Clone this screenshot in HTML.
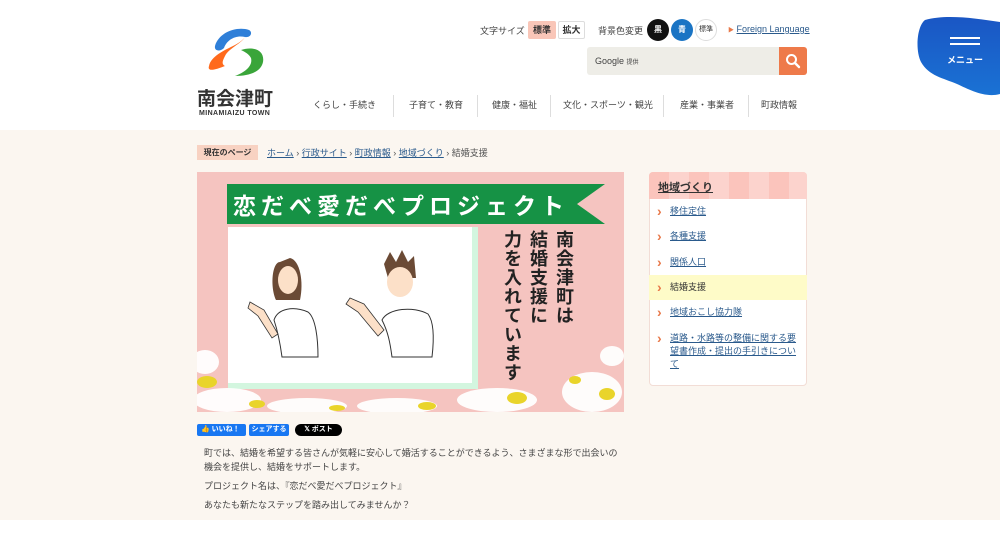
<!DOCTYPE html>
<html><head><meta charset="utf-8"><style>
*{margin:0;padding:0;box-sizing:border-box}
body{width:1000px;height:540px;overflow:hidden;background:#fff;font-family:"Liberation Sans","Noto Sans CJK JP",sans-serif;color:#333;position:relative}
.a{position:absolute}
.cream{left:0;top:130px;width:1000px;height:390px;background:#fbf6f0}
a{color:#2a5a8c}
.nav span{position:absolute;top:98px;font-size:9px;color:#444}
.sep{position:absolute;top:95px;width:1px;height:22px;background:#ddd}
.side a{display:block;font-size:9px;color:#2a5a8c;text-decoration:underline;padding-left:21px;position:relative;line-height:13px}
.side .it{position:absolute;left:649px;width:158px}
.chev{position:absolute;left:8px;top:-2px;color:#e8794a;font-size:14px;font-weight:bold}
p.t{position:absolute;left:204px;font-size:9px;color:#444;line-height:14px}
.vt{position:absolute;writing-mode:vertical-rl;font-size:18px;font-weight:bold;color:#222;line-height:22px;letter-spacing:1px}
</style></head><body>
<div class="a cream"></div>

<svg class="a" style="left:205px;top:26px" width="62" height="55" viewBox="0 0 62 55">
<path d="M10 20 C14 6 32 0 44 4 C48 6 46 12 40 11 C30 9 22 14 19 22 C15 26 9 25 10 20Z" fill="#2f7fd8"/>
<path d="M40 11 C36 18 24 22 20 30 C18 34 16 38 20 40 C10 44 2 46 4 40 C6 30 20 24 28 20 C34 17 38 14 40 11Z" fill="#ff6a1c"/>
<path d="M36 24 C48 20 60 24 58 36 C56 46 44 50 30 50 C40 46 48 40 46 32 C44 28 40 26 36 24Z" fill="#3aa53a"/>
</svg>
<div class="a" style="left:197px;top:84px;font-size:19px;font-weight:bold;color:#333">南会津町</div>
<div class="a" style="left:199px;top:110px;font-size:7px;font-weight:bold;color:#333;letter-spacing:.4px">MINAMIAIZU TOWN</div>

<div class="a" style="left:480px;top:24px;font-size:9px;color:#444">文字サイズ</div>
<div class="a" style="left:528px;top:21px;width:28px;height:18px;background:#f9c6b8;border-radius:2px;font-size:9px;font-weight:bold;text-align:center;line-height:18px">標準</div>
<div class="a" style="left:558px;top:21px;width:27px;height:18px;border:1px solid #ddd;border-radius:2px;font-size:9px;font-weight:bold;text-align:center;line-height:16px">拡大</div>
<div class="a" style="left:598px;top:24px;font-size:9px;color:#444">背景色変更</div>
<div class="a" style="left:647px;top:19px;width:22px;height:22px;border-radius:50%;background:#111;color:#fff;font-size:8px;font-weight:bold;text-align:center;line-height:22px">黒</div>
<div class="a" style="left:671px;top:19px;width:22px;height:22px;border-radius:50%;background:#1a74c4;color:#fff;font-size:8px;font-weight:bold;text-align:center;line-height:22px">青</div>
<div class="a" style="left:695px;top:19px;width:22px;height:22px;border-radius:50%;border:1px solid #ddd;font-size:7px;text-align:center;line-height:20px">標準</div>
<div class="a" style="left:728px;top:24px;font-size:9px"><span style="color:#e8794a;font-size:6px">▶</span> <a href="#">Foreign Language</a></div>
<div class="a" style="left:587px;top:47px;width:192px;height:28px;background:#eeede7;border-radius:3px 0 0 3px;font-size:9px;line-height:28px;padding-left:8px;color:#444">Google <span style="font-size:6px">提供</span></div>
<div class="a" style="left:779px;top:47px;width:28px;height:28px;background:#ee7a4a;border-radius:0 3px 3px 0">
<svg width="28" height="28"><circle cx="12.5" cy="12.5" r="4.5" stroke="#fff" stroke-width="2" fill="none"/><path d="M16 16 L20 20" stroke="#fff" stroke-width="2.4" stroke-linecap="round"/></svg></div>

<div class="nav">
<span style="left:313px">くらし・手続き</span>
<span style="left:409px">子育て・教育</span>
<span style="left:492px">健康・福祉</span>
<span style="left:563px">文化・スポーツ・観光</span>
<span style="left:680px">産業・事業者</span>
<span style="left:761px">町政情報</span>
</div>
<div class="sep" style="left:393px"></div><div class="sep" style="left:477px"></div><div class="sep" style="left:550px"></div><div class="sep" style="left:663px"></div><div class="sep" style="left:748px"></div>

<svg class="a" style="left:915px;top:16px" width="85" height="82" viewBox="0 0 85 82">
<defs><linearGradient id="g" x1="0" y1="0" x2="0" y2="1"><stop offset="0" stop-color="#1a56c4"/><stop offset="1" stop-color="#1a72d4"/></linearGradient></defs>
<path d="M10 4 C30 -2 60 2 85 6 L85 78 C70 82 55 74 42 68 C28 62 14 60 6 46 C0 34 2 10 10 4Z" fill="url(#g)"/>
<rect x="35" y="21" width="30" height="2" fill="#fff"/><rect x="35" y="27" width="30" height="2" fill="#fff"/>
<text x="50" y="47" fill="#fff" font-size="9" font-weight="bold" text-anchor="middle" font-family="Liberation Sans,Noto Sans CJK JP,sans-serif">メニュー</text>
</svg>

<div class="a" style="left:197px;top:145px;width:61px;height:15px;background:#f8d2c2;font-size:8px;font-weight:bold;text-align:center;line-height:15px">現在のページ</div>
<div class="a" style="left:267px;top:146px;font-size:9px;color:#555"><a href="#">ホーム</a> › <a href="#">行政サイト</a> › <a href="#">町政情報</a> › <a href="#">地域づくり</a> › 結婚支援</div>

<div class="a" style="left:197px;top:172px;width:427px;height:240px;background:#f5c4c0;overflow:hidden">
 <div class="a" style="left:31px;top:55px;width:250px;height:162px;background:#fff;border-right:6px solid #d3f6df;border-bottom:6px solid #d3f6df"></div>
 <svg class="a" style="left:30px;top:12px" width="380" height="42"><path d="M0 0 H378 L350 20 L378 40 H0Z" fill="#169245"/></svg>
 <div class="a" style="left:36px;top:15px;font-size:23px;font-weight:bold;color:#fff;letter-spacing:5px;white-space:nowrap">恋だべ愛だべプロジェクト</div>
 <div class="vt" style="left:356px;top:58px">南会津町は</div>
 <div class="vt" style="left:330px;top:58px">結婚支援に</div>
 <div class="vt" style="left:304px;top:58px">力を入れています</div>
 <svg class="a" style="left:45px;top:70px" width="200" height="130">
  <path d="M38 20 C30 20 28 45 34 58 L58 58 C62 40 58 18 48 16Z" fill="#6b4a35"/>
  <ellipse cx="46" cy="38" rx="10" ry="14" fill="#fce0c8"/>
  <path d="M32 78 C36 66 52 64 66 70 C74 76 76 98 76 115 L40 115 C38 100 36 90 32 78Z" fill="#fff" stroke="#333"/>
  <path d="M8 60 L22 68 L36 92 L30 96 L16 74 L6 66Z" fill="#fce0c8" stroke="#333" stroke-width=".8"/>
  <path d="M142 22 L148 10 L154 20 L160 8 L166 20 L172 14 L174 36 L146 36Z" fill="#6b4a35"/>
  <ellipse cx="158" cy="40" rx="13" ry="15" fill="#fce0c8"/>
  <path d="M140 78 C146 66 172 64 186 72 C192 80 192 98 190 115 L150 115 C148 100 146 90 140 78Z" fill="#fff" stroke="#333"/>
  <path d="M108 56 L122 62 L142 88 L136 94 L116 70 L104 62Z" fill="#fce0c8" stroke="#333" stroke-width=".8"/>
 </svg>
 <svg class="a" style="left:0;top:170px" width="427" height="70">
  <g fill="#fff" opacity=".95"><ellipse cx="8" cy="20" rx="14" ry="12"/><ellipse cx="30" cy="58" rx="34" ry="12"/><ellipse cx="110" cy="64" rx="40" ry="8"/><ellipse cx="200" cy="64" rx="40" ry="8"/><ellipse cx="300" cy="58" rx="40" ry="12"/><ellipse cx="395" cy="50" rx="30" ry="20"/><ellipse cx="415" cy="14" rx="12" ry="10"/></g>
  <g fill="#e9d42a"><ellipse cx="10" cy="40" rx="10" ry="6"/><ellipse cx="60" cy="62" rx="8" ry="4"/><ellipse cx="140" cy="66" rx="8" ry="3"/><ellipse cx="230" cy="64" rx="9" ry="4"/><ellipse cx="320" cy="56" rx="10" ry="6"/><ellipse cx="410" cy="52" rx="8" ry="6"/><ellipse cx="378" cy="38" rx="6" ry="4"/></g>
 </svg>
</div>

<div class="a" style="left:649px;top:172px;width:158px;height:214px;background:#fff;border:1px solid #f2ddd6;border-radius:4px"></div>
<div class="a" style="left:649px;top:172px;width:158px;height:27px;background:#fbc4bc;border-radius:4px 4px 0 0;background-image:repeating-linear-gradient(90deg,transparent 0 20px,rgba(255,255,255,.25) 20px 40px)"></div>
<div class="a" style="left:658px;top:179px;font-size:11px;font-weight:bold;text-decoration:underline;color:#333">地域づくり</div>
<div class="a" style="left:649px;top:275px;width:158px;height:25px;background:#fefbc8"></div>
<div class="side">
<div class="it" style="top:205px"><span class="chev">›</span><a href="#">移住定住</a></div>
<div class="it" style="top:230px"><span class="chev">›</span><a href="#">各種支援</a></div>
<div class="it" style="top:256px"><span class="chev">›</span><a href="#">関係人口</a></div>
<div class="it" style="top:281px"><span class="chev">›</span><a href="#" style="text-decoration:none;color:#333">結婚支援</a></div>
<div class="it" style="top:306px"><span class="chev">›</span><a href="#">地域おこし協力隊</a></div>
<div class="it" style="top:332px;width:150px"><span class="chev">›</span><a href="#">道路・水路等の整備に関する要望書作成・提出の手引きについて</a></div>
</div>

<div class="a" style="left:197px;top:424px;width:49px;height:12px;background:#1877f2;border-radius:2px;color:#fff;font-size:7px;font-weight:bold;line-height:12px;padding-left:4px">👍 いいね！</div>
<div class="a" style="left:249px;top:424px;width:40px;height:12px;background:#1877f2;border-radius:2px;color:#fff;font-size:7px;font-weight:bold;line-height:12px;text-align:center">シェアする</div>
<div class="a" style="left:295px;top:424px;width:47px;height:12px;background:#000;border-radius:6px;color:#fff;font-size:7px;font-weight:bold;line-height:12px;text-align:center">𝕏 ポスト</div>

<p class="t" style="top:446px;width:420px">町では、結婚を希望する皆さんが気軽に安心して婚活することができるよう、さまざまな形で出会いの機会を提供し、結婚をサポートします。</p>
<p class="t" style="top:479px">プロジェクト名は、『恋だべ愛だべプロジェクト』</p>
<p class="t" style="top:498px">あなたも新たなステップを踏み出してみませんか？</p>
</body></html>
